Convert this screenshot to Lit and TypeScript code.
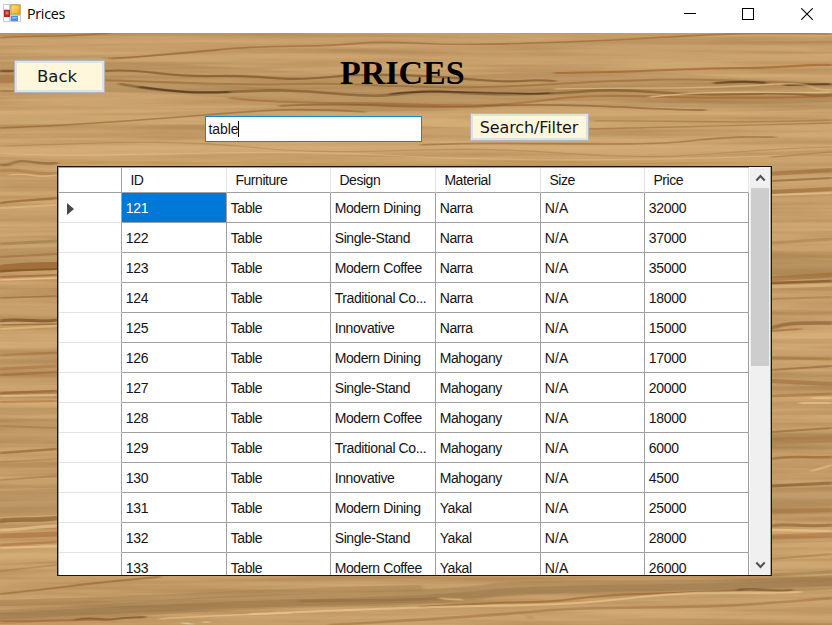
import { LitElement, html, svg, css } from "lit";
import { customElement } from "lit/decorators.js";

type Streak = [path: string, width: number, color: string, opacity: number];

const DARK = "#6b431b";
const BROWN = "#94602a";
const RED = "#a4622c";
const LIGHT = "#edc88e";
const SHADE = "#8d6d43";

const STREAKS: Streak[] = [
  // soft wide bands
  ["M0 72 C200 66 300 92 500 84 S700 90 832 92", 20, SHADE, 0.16],
  ["M104 86 C230 88 330 104 490 97 S620 102 832 96", 12, SHADE, 0.2],
  ["M0 118 C250 112 500 128 832 116", 14, LIGHT, 0.2],
  ["M0 148 C250 142 500 160 832 140", 18, LIGHT, 0.18],
  ["M0 226 C300 216 520 222 832 220", 22, LIGHT, 0.16],
  ["M0 259 C300 245 520 258 832 270", 20, SHADE, 0.2],
  ["M0 340 C300 330 520 350 832 338", 18, LIGHT, 0.18],
  ["M0 369 C300 358 520 380 832 385", 20, SHADE, 0.15],
  ["M0 430 C300 420 520 440 832 444", 20, SHADE, 0.18],
  ["M0 504 C300 490 520 510 832 500", 26, SHADE, 0.22],
  ["M0 556 C300 540 520 560 832 550", 16, LIGHT, 0.22],
  ["M0 617 C110 612 170 605 260 602 S430 599 490 591 S710 592 832 582", 14, SHADE, 0.3],
  ["M0 616 C110 611 170 607 260 604 S430 600 490 593 S710 590 832 582", 7, SHADE, 0.35],
  ["M0 603 C150 600 280 590 420 588", 6, SHADE, 0.3],
  // upper strip
  ["M0 38 C30 35 60 38 110 33", 1.5, BROWN, 0.6],
  ["M110 59 C190 53 235 46 300 46 S350 40 410 43 S560 43 650 38 S730 33 832 34", 1.6, BROWN, 0.6],
  ["M555 73 C620 73 690 68 740 68 S800 64 832 65", 2.2, RED, 0.7],
  ["M104 58 C140 57 165 56 220 50", 1.2, BROWN, 0.45],
  ["M0 71 L14 71", 2.5, DARK, 0.75],
  ["M0 79 L14 79", 9, BROWN, 0.4],
  ["M0 91 L50 91", 2, BROWN, 0.5],
  ["M104 71 C145 68 160 77 215 76 S280 82 330 77 S430 76 480 80 S520 78 555 81", 2.2, DARK, 0.55],
  ["M104 80 C170 82 230 86 300 84 S420 92 555 84 S720 80 832 85", 2, BROWN, 0.5],
  ["M120 84 C160 91 185 93 225 92 S270 88 340 94 S400 88 450 92 S540 95 590 91 S660 97 740 94 S800 98 832 95", 2.6, DARK, 0.5],
  ["M140 87 C175 91 190 94 229 92", 2, "#3d2816", 0.6],
  ["M390 94 C430 89 470 93 500 93 S530 95 550 93", 1.6, "#3d2816", 0.6],
  ["M715 83 C740 81 760 82 765 83 M785 85 L830 84", 2.2, "#4a2e17", 0.65],
  ["M230 98 C290 105 350 102 400 104 S500 107 555 99 S700 102 832 96", 2.2, RED, 0.6],
  ["M280 106 C360 101 410 110 490 106 S650 110 705 110", 1.8, DARK, 0.45],
  ["M555 89 C620 87 690 90 760 85 S800 91 832 90", 1.4, LIGHT, 0.6],
  ["M650 97 C720 89 780 94 832 92", 1.4, LIGHT, 0.75],
  ["M0 128 C60 126 130 121 205 115 S300 108 365 112", 1.7, BROWN, 0.6],
  ["M595 121 C650 120 740 124 832 120", 1.4, BROWN, 0.4],
  ["M421 145 C500 140 630 148 690 141 S755 138 775 137", 1.7, BROWN, 0.55],
  ["M589 129 C680 127 740 125 832 123", 1.3, BROWN, 0.45],
  ["M0 146 C90 144 160 138 260 148 S430 143 560 153 S720 149 832 147", 1.2, BROWN, 0.3],
  ["M0 153 C90 160 240 147 380 155 S700 160 832 153", 1.2, LIGHT, 0.4],
  ["M0 165 L9 165 C20 156 38 166 57 163", 2.4, DARK, 0.45],
  ["M0 171 C20 167 30 176 57 173", 3, RED, 0.35],
  ["M10 175 C30 172 35 179 57 175", 1.4, LIGHT, 0.6],
  // left and right sides of the table
  ["M0 203 C20 200 40 200 57 198", 2.4, BROWN, 0.7],
  ["M0 208 L57 205", 2, LIGHT, 0.5],
  ["M0 244 L57 241", 3, SHADE, 0.4],
  ["M0 257 L57 254", 2.2, BROWN, 0.45],
  ["M0 269 C20 266 40 266 57 266", 8, BROWN, 0.7],
  ["M0 271 L57 269", 2, DARK, 0.5],
  ["M0 277 L57 275", 1.8, RED, 0.7],
  ["M0 280 L57 278", 1.5, LIGHT, 0.8],
  ["M0 298 L57 296", 1.7, BROWN, 0.6],
  ["M0 321 C20 318 40 323 57 320", 3, DARK, 0.65],
  ["M0 325 L57 324", 1.5, BROWN, 0.7],
  ["M0 329 L57 326", 1.8, LIGHT, 0.6],
  ["M0 355 L57 353", 2.5, BROWN, 0.4],
  ["M0 369 L57 366", 3, RED, 0.4],
  ["M0 375 L57 372", 2.5, RED, 0.55],
  ["M0 393 L57 391", 2.5, BROWN, 0.7],
  ["M0 396 L57 395", 2, LIGHT, 0.7],
  ["M0 402 L57 401", 2, RED, 0.45],
  ["M0 426 L57 428", 2, BROWN, 0.35],
  ["M0 453 L57 449", 2.5, BROWN, 0.65],
  ["M0 462 L57 459", 1.4, BROWN, 0.3],
  ["M0 480 L57 476", 1.6, BROWN, 0.4],
  ["M0 521 C20 518 35 521 57 518", 4.5, DARK, 0.5],
  ["M0 530 C20 530 40 526 57 526", 3, LIGHT, 0.7],
  ["M0 536 L57 534", 5, RED, 0.5],
  ["M0 545 L57 542", 2.5, RED, 0.5],
  ["M0 548 L57 546", 2, LIGHT, 0.7],
  ["M0 571 L57 565", 1.6, BROWN, 0.35],
  ["M771 157 L832 152", 1.5, BROWN, 0.4],
  ["M771 174 L832 170", 4, BROWN, 0.45],
  ["M771 181 L832 178", 2, DARK, 0.45],
  ["M771 192 L832 189", 4, BROWN, 0.5],
  ["M771 195 L832 193", 2, LIGHT, 0.7],
  ["M771 243 L832 239", 3, BROWN, 0.3],
  ["M771 279 L832 275", 5, BROWN, 0.45],
  ["M771 283 L832 281", 2.5, DARK, 0.65],
  ["M771 287 L832 285", 3, LIGHT, 0.5],
  ["M771 299 L832 297", 2, BROWN, 0.35],
  ["M771 328 C790 322 800 323 832 323", 3.5, DARK, 0.45],
  ["M771 331 L800 329", 2, RED, 0.55],
  ["M771 358 L832 359", 3, BROWN, 0.4],
  ["M771 370 L832 366", 2, DARK, 0.4],
  ["M771 381 L832 384", 4, BROWN, 0.45],
  ["M771 396 L832 394", 3, BROWN, 0.45],
  ["M812 398 L832 398 M800 403 L832 403", 1.5, LIGHT, 0.9],
  ["M771 432 L832 428", 2, BROWN, 0.6],
  ["M771 441 L832 439", 7, BROWN, 0.3],
  ["M771 459 C790 455 800 458 832 457", 2.5, BROWN, 0.6],
  ["M812 471 L832 465", 1.4, LIGHT, 0.8],
  ["M771 486 L832 483", 3, DARK, 0.5],
  ["M771 511 L832 510", 4, BROWN, 0.35],
  ["M771 526 C785 522 800 528 832 525", 3, DARK, 0.4],
  ["M771 530 L832 531", 2.5, LIGHT, 0.7],
  ["M771 537 L832 535", 5, RED, 0.4],
  ["M771 559 L832 554", 2, BROWN, 0.35],
  ["M771 575 L832 572", 3, SHADE, 0.4],
  // bottom edge
  ["M0 594 C60 588 105 581 160 577", 1.8, BROWN, 0.6],
  ["M75 620 C95 616 100 621 115 619 S135 618 145 617", 2, DARK, 0.6],
  ["M0 621 C45 622 70 619 110 620", 2, RED, 0.6],
  ["M300 601 C340 600 400 601 440 598", 2.4, DARK, 0.2],
  ["M420 607 C470 604 500 602 535 602 S570 596 640 594 S710 592 742 590", 2, BROWN, 0.6],
  ["M738 590 C755 587 775 593 792 590", 2.4, DARK, 0.5],
  ["M250 614 C330 611 410 607 480 606 S580 604 640 597 S740 594 800 592", 2.2, LIGHT, 0.7],
  ["M440 598 C450 601 460 598 462 600", 1.8, LIGHT, 0.6],
  ["M330 625 C430 619 490 616 540 611 S680 609 740 605 S800 601 832 598", 2.6, BROWN, 0.4],
  ["M160 619 C200 616 240 615 290 613", 1.6, LIGHT, 0.6],
  ["M530 616 L530 619", 1.2, DARK, 0.6],
  ["M182 623 L192 624 M204 622 L209 622", 1.6, "#e3d3bd", 0.7],
];

@customElement("wood-panel")
class WoodPanel extends LitElement {
  static styles = css`
    :host { display: block; }
    svg { display: block; width: 100%; height: 100%; }
  `;
  render() {
    return html`<svg viewBox="0 33 832 592" preserveAspectRatio="none" aria-hidden="true">
      <defs>
        <filter id="grain" x="0" y="0" width="100%" height="100%" color-interpolation-filters="sRGB">
          <feTurbulence type="fractalNoise" baseFrequency="0.0035 0.13" numOctaves="4" seed="8"></feTurbulence>
          <feColorMatrix values="0 0 0 0 .5  0 0 0 0 .33  0 0 0 0 .14  1.3 0 0 0 -.5"></feColorMatrix>
        </filter>
        <filter id="sheen" x="0" y="0" width="100%" height="100%" color-interpolation-filters="sRGB">
          <feTurbulence type="fractalNoise" baseFrequency="0.004 0.1" numOctaves="3" seed="31"></feTurbulence>
          <feColorMatrix values="0 0 0 0 .92  0 0 0 0 .76  0 0 0 0 .53  0 1.4 0 0 -.55"></feColorMatrix>
        </filter>
        <filter id="soften" x="-10" y="23" width="852" height="612" filterUnits="userSpaceOnUse" color-interpolation-filters="sRGB">
          <feGaussianBlur stdDeviation="2 0.75"></feGaussianBlur>
        </filter>
      </defs>
      <rect x="0" y="33" width="832" height="592" fill="#c7a06c"></rect>
      <rect x="0" y="33" width="832" height="592" filter="url(#grain)" opacity=".55"></rect>
      <rect x="0" y="33" width="832" height="592" filter="url(#sheen)" opacity=".5"></rect>
      <g filter="url(#soften)" fill="none" stroke-linecap="round">
        ${STREAKS.map(([d, w, c, o]) => svg`<path d=${d} stroke=${c} stroke-width=${w} opacity=${o}></path>`)}
      </g>
    </svg>`;
  }
}

const COLUMNS = ["ID", "Furniture", "Design", "Material", "Size", "Price"];
const DESIGNS = ["Modern Dining", "Single-Stand", "Modern Coffee", "Traditional Co...", "Innovative"];
const MATERIALS = ["Narra", "Mahogany", "Yakal"];
const PRICES = [32000, 37000, 35000, 18000, 15000, 17000, 20000, 18000, 6000, 4500, 25000, 28000, 26000];
const ROWS = PRICES.map((price, i) => [
  String(121 + i), "Table", DESIGNS[i % 5], MATERIALS[Math.floor(i / 5)], "N/A", String(price),
]);

@customElement("price-grid")
class PriceGrid extends LitElement {
  static styles = css`
    :host {
      display: flex; box-sizing: border-box; width: 715px; height: 410px; overflow: hidden;
      border: 1px solid #141414; outline: 1px solid rgba(30, 25, 20, .35); outline-offset: -1px;
      background: #fff; color: #141414;
      font: 14px/20px "Liberation Sans", Arial, sans-serif;
    }
    .table { width: 691px; flex: none; border-left: 1px solid #a0a0a0; box-sizing: border-box; border-top: 1px solid #a0a0a0; }
    .row { display: grid; grid-template-columns: 63px 105px 104px 105px 105px 104px 104px; height: 30px; }
    .head { height: 25px; }
    .cell {
      box-sizing: border-box; border-right: 1px solid #a0a0a0; border-bottom: 1px solid #a0a0a0;
      padding: 5px 0 0 3.7px; white-space: nowrap; overflow: hidden; letter-spacing: -.4px;
    }
    .cell:nth-child(2), .cell:nth-child(7) { letter-spacing: -.25px; }
    .cell:nth-child(6) { letter-spacing: .2px; }
    .head .cell { padding: 2px 0 0 8.4px; border-right-color: #e5e5e5; border-bottom-color: #a0a0a0; letter-spacing: -.45px; }
    .cell.stub { border-bottom-color: #e2e2e2; padding: 10px 0 0 8px; }
    .head .cell.stub { border-color: #a0a0a0; }
    .cell.selected { background: #0078d7; color: #fff; }
    .stub svg { display: block; }
    .bar { flex: 1; display: flex; flex-direction: column; background: #f0f0f0; border-left: 1px solid #fafafa; border-right: 1px solid #aaa; }
    .arrow { height: 21px; display: grid; place-items: center; }
    .thumb { height: 178px; background: #cdcdcd; margin: 0 1px; }
    .gap { flex: 1; }
  `;
  render() {
    return html`
      <div class="table">
        <div class="row head"><div class="cell stub"></div>${COLUMNS.map((c) => html`<div class="cell">${c}</div>`)}</div>
        ${ROWS.map((r, i) => html`<div class="row">
          <div class="cell stub">${i === 0 ? html`<svg width="8" height="12"><path d="M0 0L7 6L0 12Z" fill="#484848"></path></svg>` : ""}</div>
          ${r.map((v, j) => html`<div class="cell ${i === 0 && j === 0 ? "selected" : ""}">${v}</div>`)}
        </div>`)}
      </div>
      <div class="bar">
        <div class="arrow"><svg width="11" height="8"><path d="M1.3 6.5L5.5 2L9.7 6.5" fill="none" stroke="#505050" stroke-width="2"></path></svg></div>
        <div class="thumb"></div>
        <div class="gap"></div>
        <div class="arrow"><svg width="11" height="8"><path d="M1.3 1.5L5.5 6L9.7 1.5" fill="none" stroke="#505050" stroke-width="2"></path></svg></div>
      </div>`;
  }
}

@customElement("app-root")
class AppRoot extends LitElement {
  static styles = css`
    :host { display: flex; flex-direction: column; width: 832px; height: 625px; overflow: hidden; background: #fff; }
    .titlebar { height: 33px; flex: none; display: flex; box-sizing: border-box; padding: 4px 0 0 3px; }
    .logo { display: block; width: 18px; height: 18px; }
    .title { flex: 1; margin: 0 0 0 6px; font: 14.3px/20px "Open Sans", "Noto Sans", sans-serif; letter-spacing: -.3px; color: #000; }
    .controls { display: flex; gap: 46px; padding: 4px 19px 0 0; }
    .controls svg { display: block; width: 12px; height: 12px; }
    .controls svg:last-child { margin-left: 1px; }
    .client { position: relative; flex: 1; display: flex; flex-direction: column; }
    wood-panel { position: absolute; inset: 0; }
    .content { position: relative; display: flex; flex-direction: column; }
    .top { display: flex; height: 80px; align-items: flex-start; }
    h1 { margin: 20px 0 0 235.5px; font: bold 34px/39px "Liberation Serif", serif; color: #000; }
    .button {
      box-sizing: border-box; border: 1px solid #b3b5b8; box-shadow: inset 0 0 0 2px #e1e1e1; background: #fff7dc;
      color: #141414; padding: 0; text-align: center; white-space: nowrap;
      font-family: "DejaVu Sans", Verdana, sans-serif; font-size: 16.5px; letter-spacing: 0;
    }
    .back { width: 91px; height: 33px; margin: 27px 0 0 13.5px; line-height: 31px; padding-right: 4px; }
    .filter { width: 119px; height: 28px; margin-left: 48px; line-height: 27px; font-size: 16px; padding-right: 1px; letter-spacing: -.1px; }
    .search { display: flex; align-items: flex-start; height: 53px; padding-left: 205px; }
    .field {
      display: flex; align-items: center; box-sizing: border-box; width: 217px; height: 26px; margin-top: 3px;
      border: 1px solid #1683d8; background: #fff; padding-left: 2.5px;
      font: 14px/20px "Liberation Sans", Arial, sans-serif; letter-spacing: -.1px; color: #141414;
    }
    .caret { width: 1px; height: 16px; background: #000; }
    price-grid { margin-left: 57px; }
  `;
  render() {
    return html`
      <div class="titlebar">
        <svg class="logo" viewBox="0 0 18 18">
          <defs><linearGradient id="y" x2="1" y2="1"><stop stop-color="#ffe98f"></stop><stop offset="1" stop-color="#eaa800"></stop></linearGradient></defs>
          <rect width="18" height="18" rx="1" fill="#c9c9c9"></rect>
          <path d="M1 1H6V5H1ZM1 13H6V17H1ZM15 12H17V17H15Z" fill="#fff"></path>
          <rect x="1" y="6" width="6" height="7" fill="#b52a1f"></rect><rect x="2.5" y="7.5" width="3" height="3" fill="#df7162"></rect>
          <rect x="8" y="1" width="9" height="9" fill="url(#y)" stroke="#c98e16" stroke-width=".8"></rect>
          <rect x="8" y="12" width="7" height="5" fill="#4c8be6"></rect><rect x="9" y="13" width="5" height="1.5" fill="#93bdf6"></rect>
        </svg>
        <div class="title">Prices</div>
        <div class="controls">
          <svg><path d="M0 5.5H12" stroke="#000"></path></svg>
          <svg><rect x=".5" y=".5" width="11" height="11" fill="none" stroke="#000"></rect></svg>
          <svg><path d="M.3 .3L11.7 11.7M11.7 .3L.3 11.7" stroke="#000" stroke-width="1.1"></path></svg>
        </div>
      </div>
      <div class="client">
        <wood-panel></wood-panel>
        <div class="content">
          <div class="top"><div class="button back">Back</div><h1>PRICES</h1></div>
          <div class="search">
            <div class="field"><span>table</span><span class="caret"></span></div>
            <div class="button filter">Search/Filter</div>
          </div>
          <price-grid></price-grid>
        </div>
      </div>`;
  }
}
